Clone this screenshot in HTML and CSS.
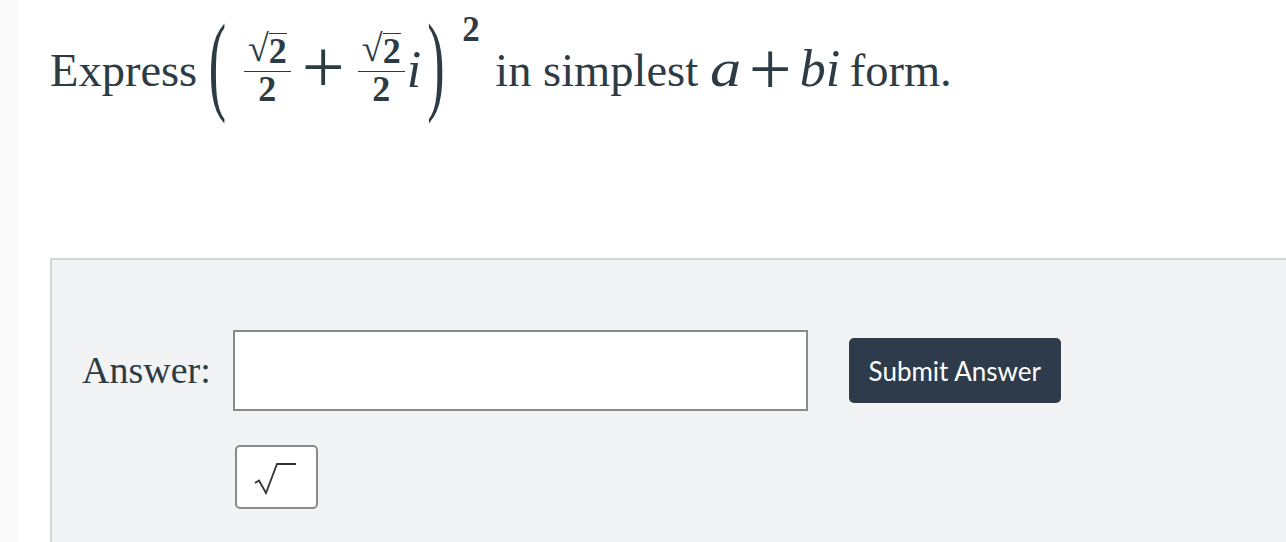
FILE: index.html
```html
<!DOCTYPE html>
<html>
<head>
<meta charset="utf-8">
<link rel="stylesheet" href="styles.css">
</head>
<body>
<div class="page">
  <div class="strip"></div>
  <main class="content">
    <p class="question">Express <span class="expr"><span class="paren lp">(</span><span class="frac"><span class="num"><span class="rad">√</span><span class="radarg">2</span></span><span class="den">2</span></span><span class="op">+</span><span class="frac"><span class="num"><span class="rad">√</span><span class="radarg">2</span></span><span class="den">2</span></span><span class="ei">i</span><span class="paren rp">)</span><span class="sup">2</span></span> in simplest <span class="mi ma">a</span><span class="bin">+</span><span class="mi mbi">bi</span> form.</p>

    <section class="answer-box">
      <div class="answer-row">
        <label class="answer-label" for="ans">Answer:</label>
        <div class="input-col">
          <input id="ans" class="answer-input" type="text">
          <button class="sqrt-btn" type="button" aria-label="square root">
            <svg width="44" height="32" viewBox="0 0 44 32"><path d="M1 20 L5 17.5 L12 30 L23 1 L42 1" fill="none" stroke="#333" stroke-width="1.8" stroke-linejoin="miter"/></svg>
          </button>
        </div>
        <button class="submit-btn" type="button">Submit Answer</button>
      </div>
    </section>
  </main>
</div>
</body>
</html>
```

FILE: styles.css
```css
html, body {
  margin: 0;
  padding: 0;
  background: #ffffff;
  overflow: hidden;
}

.page {
  display: flex;
  min-height: 542px;
  width: 1400px;
}

.strip {
  width: 18px;
  flex: none;
  background: #fafafa;
}

.content {
  flex: 1;
  padding-left: 32px;
  color: #2d3b45;
}

.question {
  box-sizing: border-box;
  margin: 0;
  padding-top: 27px;
  height: 113px;
  font-family: "Liberation Serif", "Times New Roman", serif;
  font-size: 46.5px;
  line-height: 86px;
  white-space: nowrap;
}

/* ---------- math expression ---------- */
.expr {
  display: inline-flex;
  align-items: flex-start;
  vertical-align: middle;
  height: 96px;
  margin: 0 4px 0 0;
}

.paren {
  display: inline-block;
  width: 17px;
  font-size: 52px;
  line-height: 52px;
  margin-top: 11px;
  transform: scale(1, 2.1);
}

.lp {
  margin-right: 18px;
}

.rp {
  margin-left: 6px;
}

.frac {
  display: flex;
  flex-direction: column;
  align-items: center;
  width: 47px;
  margin-top: 6px;
  font-size: 36px;
  font-weight: bold;
}

.num {
  align-self: stretch;
  display: flex;
  justify-content: center;
  align-items: flex-start;
  padding-bottom: 4.5px;
  border-bottom: 1.5px solid #2d3b45;
}

.rad {
  font-weight: normal;
  font-size: 38px;
  line-height: 36px;
  margin-top: -3px;
}

.radarg {
  border-top: 1.5px solid #2d3b45;
  padding-top: 2px;
  line-height: 30px;
}

.den {
  line-height: 30px;
  padding-top: 2px;
}

.op {
  font-size: 76px;
  line-height: 40px;
  margin: 19px 13px 0 11px;
}

.ei {
  font-style: italic;
  font-size: 52px;
  line-height: 52px;
  margin: 17px 0 0 2px;
}

.sup {
  font-size: 35px;
  font-weight: bold;
  line-height: 35px;
  margin: -15px 0 0 18px;
}

/* ---------- inline math in text ---------- */
.mi {
  font-style: italic;
  font-size: 52px;
  line-height: 40px;
}

.ma {
  display: inline-block;
  transform: scale(1.2, 1);
  transform-origin: left center;
  margin-right: 5px;
}

.mbi {
  margin-right: -2px;
}

.bin {
  font-size: 76px;
  line-height: 40px;
  vertical-align: -8px;
  margin: 0 8px 0 8px;
}

/* ---------- answer box ---------- */
.answer-box {
  margin-top: 145px;
  background: #f2f3f5;
  border-top: 2px solid #d4d5d7;
  border-left: 2px solid #d4d5d7;
  padding: 70px 0 40px 30px;
  height: 300px;
}

.answer-row {
  display: flex;
  align-items: flex-start;
}

.answer-label {
  font-family: "Liberation Serif", "Times New Roman", serif;
  font-size: 38px;
  line-height: 81px;
  margin-right: 22px;
}

.input-col {
  display: flex;
  flex-direction: column;
  align-items: flex-start;
  gap: 34px;
}

.answer-input {
  box-sizing: border-box;
  width: 575px;
  height: 81px;
  border: 2px solid #8a8a8a;
  background: #ffffff;
  margin: 0;
  outline: none;
}

.sqrt-btn {
  box-sizing: border-box;
  width: 83px;
  height: 64px;
  margin-left: 2px;
  background: #ffffff;
  border: 2px solid #8a8a8a;
  border-radius: 5px;
  display: flex;
  align-items: center;
  justify-content: center;
  padding: 4px 0 0 0;
}

.submit-btn {
  margin-left: 41px;
  margin-top: 8px;
  width: 212px;
  height: 65px;
  background: #2d3b4a;
  color: #ffffff;
  border: none;
  border-radius: 5px;
  font-family: Lato, "Open Sans", sans-serif;
  font-size: 26px;
  padding: 0;
}
```
